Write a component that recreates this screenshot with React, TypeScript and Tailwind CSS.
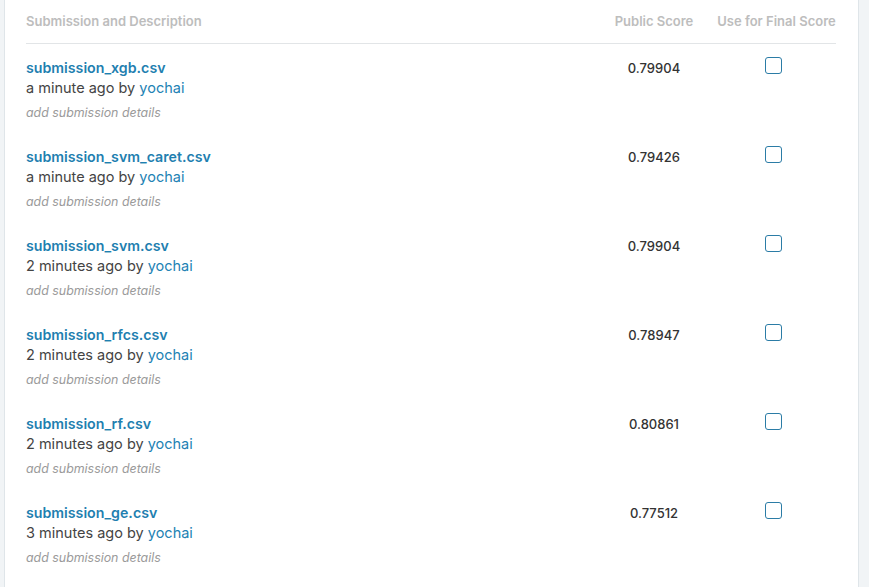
const submissions = [
  { file: "submission_xgb.csv", when: "a minute ago", score: "0.79904" },
  { file: "submission_svm_caret.csv", when: "a minute ago", score: "0.79426" },
  { file: "submission_svm.csv", when: "2 minutes ago", score: "0.79904" },
  { file: "submission_rfcs.csv", when: "2 minutes ago", score: "0.78947" },
  { file: "submission_rf.csv", when: "2 minutes ago", score: "0.80861" },
  { file: "submission_ge.csv", when: "3 minutes ago", score: "0.77512" },
];

export default function App() {
  return (
    <div
      className="w-[869px] h-[587px] overflow-hidden bg-[#f1f4f6] pl-[4px] pr-[10px]"
      style={{ fontFamily: "Inter, 'Noto Sans', sans-serif" }}
    >
      <div className="h-full bg-white border-x border-[#dfe5e9] pl-[21px] pr-[22px]">
        <div className="grid grid-cols-[1fr_100px_120px] gap-x-3 h-[44px] pt-[1px] items-center border-b border-[#e2e5e7] text-[13px] font-semibold text-[#bdbdbd]">
          <div>Submission and Description</div>
          <div className="text-center">Public Score</div>
          <div className="text-center pl-[1px]">Use for Final Score</div>
        </div>
        {submissions.map((s) => (
          <div
            key={s.file}
            className="grid grid-cols-[1fr_100px_120px] gap-x-3 h-[89px] pt-[14px]"
          >
            <div className="flex flex-col">
              <a className="text-[14.2px] leading-[20px] font-semibold text-[#1f7fb0]">
                {s.file}
              </a>
              <div className="text-[14.5px] leading-[20px] text-[#444]">
                {s.when} by <span className="text-[#2282b4]">yochai</span>
              </div>
              <div className="mt-[5px] text-[12.4px] leading-[20px] italic text-[#9a9a9a]">
                add submission details
              </div>
            </div>
            <div className="text-center text-[13px] leading-[20px] font-medium text-[#333]">
              {s.score}
            </div>
            <div className="flex justify-center pr-[6px] -mt-[1px]">
              <div className="w-[17px] h-[17px] rounded-[3px] border-[1.5px] border-[#2b7ca6]" />
            </div>
          </div>
        ))}
      </div>
    </div>
  );
}
